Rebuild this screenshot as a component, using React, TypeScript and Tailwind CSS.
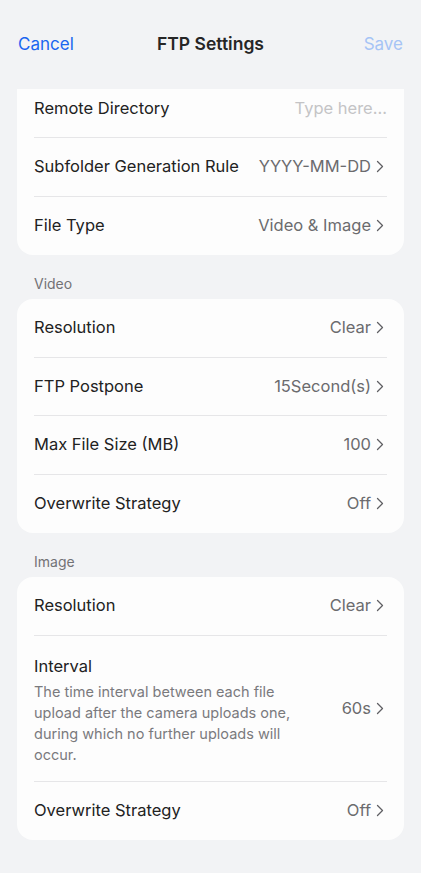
import * as React from "react";

const Chevron = () => (
  <svg width="8" height="13" viewBox="0 0 8 13" fill="none" className="ml-[5px] mr-[3px] shrink-0">
    <path d="M1.5 1.5 6.5 6.5 1.5 11.5" stroke="#5f5f63" strokeWidth="1.3" strokeLinecap="round" strokeLinejoin="round" />
  </svg>
);

function Row({ label, value }: { label: string; value: string }) {
  return (
    <div className="mx-[17px] flex h-[58.5px] items-center border-b border-[#e6e6e8] last:border-b-0">
      <span className="flex-1 text-[16.5px] text-[#222]">{label}</span>
      <span className="flex items-center text-[16.5px] text-[#6b6b6e]">
        {value}
        <Chevron />
      </span>
    </div>
  );
}

function Section({ title, children }: { title: string; children: React.ReactNode }) {
  return (
    <div>
      <p className="px-[34px] pb-[5px] pt-[18px] text-[14px] text-[#727276]">{title}</p>
      <div className="mx-[17px] overflow-hidden rounded-2xl bg-[#fdfdfd]">{children}</div>
    </div>
  );
}

export default function App() {
  return (
    <div className="min-h-[873px] w-full bg-[#f2f3f5] font-['Inter',sans-serif]">
      <header className="grid h-[89px] grid-cols-[1fr_auto_1fr] items-center px-[18px]">
        <button className="justify-self-start text-[17px] text-[#1a66f0]">Cancel</button>
        <h1 className="text-[17.5px] font-semibold text-[#262626]">FTP Settings</h1>
        <button className="justify-self-end text-[17px] text-[#a6c4f5]">Save</button>
      </header>

      <div className="mx-[17px] overflow-hidden rounded-b-2xl bg-[#fdfdfd]">
        <div className="mx-[17px] flex h-[49px] items-center border-b border-[#e6e6e8] pb-[10px]">
          <span className="flex-1 text-[16.5px] text-[#222]">Remote Directory</span>
          <span className="text-[16.5px] text-[#c4c4c6]">Type here...</span>
        </div>
        <Row label="Subfolder Generation Rule" value="YYYY-MM-DD" />
        <Row label="File Type" value="Video & Image" />
      </div>

      <Section title="Video">
        <Row label="Resolution" value="Clear" />
        <Row label="FTP Postpone" value="15Second(s)" />
        <Row label="Max File Size (MB)" value="100" />
        <Row label="Overwrite Strategy" value="Off" />
      </Section>

      <Section title="Image">
        <Row label="Resolution" value="Clear" />
        <div className="mx-[17px] flex h-[146px] items-center border-b border-[#e6e6e8]">
          <div className="flex-1 pt-[3px]">
            <p className="text-[16.5px] text-[#222]">Interval</p>
            <p className="mt-[3px] max-w-[268px] text-[14.5px] leading-[21px] text-[#7a7a7d]">
              The time interval between each file upload after the camera uploads one, during which no further uploads will occur.
            </p>
          </div>
          <span className="flex items-center text-[16.5px] text-[#6b6b6e]">
            60s
            <Chevron />
          </span>
        </div>
        <Row label="Overwrite Strategy" value="Off" />
      </Section>
    </div>
  );
}
